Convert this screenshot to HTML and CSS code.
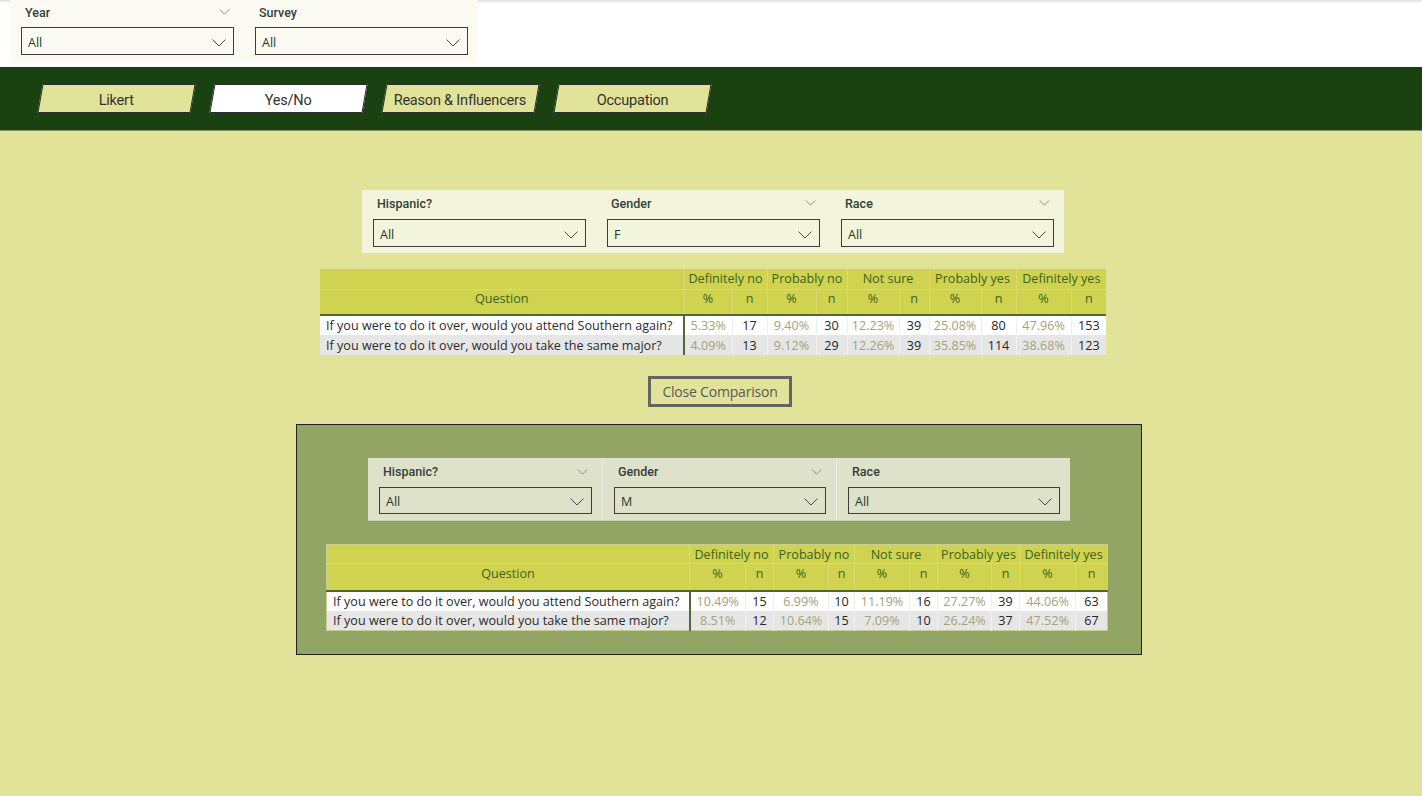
FILE: index.html
```html
<!DOCTYPE html>
<html lang="en">
<head>
<meta charset="utf-8">
<title>Yes/No</title>
<link rel="stylesheet" href="styles.css">
</head>
<body>
<header class="top">
  <div class="slicers slicers--top">
    <div class="slicer">
      <div class="slicer-head"><span>Year</span><svg class="head-chev" viewBox="0 0 12 7"><polyline points="0.5,0.5 6,6 11.5,0.5"/></svg></div>
      <div class="dropdown"><span>All</span><svg class="dd-chev" viewBox="0 0 14 8"><polyline points="0.5,0.5 7,7 13.5,0.5"/></svg></div>
    </div>
    <div class="slicer">
      <div class="slicer-head"><span>Survey</span></div>
      <div class="dropdown"><span>All</span><svg class="dd-chev" viewBox="0 0 14 8"><polyline points="0.5,0.5 7,7 13.5,0.5"/></svg></div>
    </div>
  </div>
</header>

<nav class="tabs">
  <div class="tab"><span>Likert</span></div>
  <div class="tab tab--active"><span>Yes/No</span></div>
  <div class="tab"><span>Reason &amp; Influencers</span></div>
  <div class="tab"><span>Occupation</span></div>
</nav>

<main class="page">
  <section class="slicers slicers--light">
    <div class="slicer">
      <div class="slicer-head"><span>Hispanic?</span></div>
      <div class="dropdown"><span>All</span><svg class="dd-chev" viewBox="0 0 14 8"><polyline points="0.5,0.5 7,7 13.5,0.5"/></svg></div>
    </div>
    <div class="slicer">
      <div class="slicer-head"><span>Gender</span><svg class="head-chev" viewBox="0 0 12 7"><polyline points="0.5,0.5 6,6 11.5,0.5"/></svg></div>
      <div class="dropdown"><span>F</span><svg class="dd-chev" viewBox="0 0 14 8"><polyline points="0.5,0.5 7,7 13.5,0.5"/></svg></div>
    </div>
    <div class="slicer">
      <div class="slicer-head"><span>Race</span><svg class="head-chev" viewBox="0 0 12 7"><polyline points="0.5,0.5 6,6 11.5,0.5"/></svg></div>
      <div class="dropdown"><span>All</span><svg class="dd-chev" viewBox="0 0 14 8"><polyline points="0.5,0.5 7,7 13.5,0.5"/></svg></div>
    </div>
  </section>

  <table class="matrix matrix--a">
    <colgroup>
      <col class="cq"><col class="c1"><col class="c2"><col class="c3"><col class="c4"><col class="c5"><col class="c6"><col class="c7"><col class="c8"><col class="c9"><col class="c10">
    </colgroup>
    <thead>
      <tr class="h1"><th class="q"></th><th colspan="2">Definitely no</th><th colspan="2">Probably no</th><th colspan="2">Not sure</th><th colspan="2">Probably yes</th><th colspan="2">Definitely yes</th></tr>
      <tr class="h2"><th class="q">Question</th><th>%</th><th>n</th><th>%</th><th>n</th><th>%</th><th>n</th><th>%</th><th>n</th><th>%</th><th>n</th></tr>
    </thead>
    <tbody>
      <tr><td class="q">If you were to do it over, would you attend Southern again?</td><td class="p">5.33%</td><td class="n">17</td><td class="p">9.40%</td><td class="n">30</td><td class="p">12.23%</td><td class="n">39</td><td class="p">25.08%</td><td class="n">80</td><td class="p">47.96%</td><td class="n">153</td></tr>
      <tr class="alt"><td class="q">If you were to do it over, would you take the same major?</td><td class="p">4.09%</td><td class="n">13</td><td class="p">9.12%</td><td class="n">29</td><td class="p">12.26%</td><td class="n">39</td><td class="p">35.85%</td><td class="n">114</td><td class="p">38.68%</td><td class="n">123</td></tr>
    </tbody>
  </table>

  <button class="close-btn" type="button">Close Comparison</button>

  <section class="compare">
    <div class="slicers slicers--pale">
      <div class="slicer">
        <div class="slicer-head"><span>Hispanic?</span><svg class="head-chev" viewBox="0 0 12 7"><polyline points="0.5,0.5 6,6 11.5,0.5"/></svg></div>
        <div class="dropdown"><span>All</span><svg class="dd-chev" viewBox="0 0 14 8"><polyline points="0.5,0.5 7,7 13.5,0.5"/></svg></div>
      </div>
      <div class="slicer">
        <div class="slicer-head"><span>Gender</span><svg class="head-chev" viewBox="0 0 12 7"><polyline points="0.5,0.5 6,6 11.5,0.5"/></svg></div>
        <div class="dropdown"><span>M</span><svg class="dd-chev" viewBox="0 0 14 8"><polyline points="0.5,0.5 7,7 13.5,0.5"/></svg></div>
      </div>
      <div class="slicer">
        <div class="slicer-head"><span>Race</span></div>
        <div class="dropdown"><span>All</span><svg class="dd-chev" viewBox="0 0 14 8"><polyline points="0.5,0.5 7,7 13.5,0.5"/></svg></div>
      </div>
    </div>

    <table class="matrix matrix--b">
      <colgroup>
        <col class="cq"><col class="c1"><col class="c2"><col class="c3"><col class="c4"><col class="c5"><col class="c6"><col class="c7"><col class="c8"><col class="c9"><col class="c10">
      </colgroup>
      <thead>
        <tr class="h1"><th class="q"></th><th colspan="2">Definitely no</th><th colspan="2">Probably no</th><th colspan="2">Not sure</th><th colspan="2">Probably yes</th><th colspan="2">Definitely yes</th></tr>
        <tr class="h2"><th class="q">Question</th><th>%</th><th>n</th><th>%</th><th>n</th><th>%</th><th>n</th><th>%</th><th>n</th><th>%</th><th>n</th></tr>
      </thead>
      <tbody>
        <tr><td class="q">If you were to do it over, would you attend Southern again?</td><td class="p">10.49%</td><td class="n">15</td><td class="p">6.99%</td><td class="n">10</td><td class="p">11.19%</td><td class="n">16</td><td class="p">27.27%</td><td class="n">39</td><td class="p">44.06%</td><td class="n">63</td></tr>
        <tr class="alt"><td class="q">If you were to do it over, would you take the same major?</td><td class="p">8.51%</td><td class="n">12</td><td class="p">10.64%</td><td class="n">15</td><td class="p">7.09%</td><td class="n">10</td><td class="p">26.24%</td><td class="n">37</td><td class="p">47.52%</td><td class="n">67</td></tr>
      </tbody>
    </table>
  </section>
</main>
</body>
</html>
```

FILE: styles.css
```css
* { box-sizing: border-box; }

html, body {
  margin: 0;
  padding: 0;
}

body {
  width: 1422px;
  min-height: 796px;
  background: #e1e398;
  font-family: "Open Sans", "Noto Sans", sans-serif;
  color: #333;
}

/* ---------- top filter strip ---------- */
.top {
  height: 67px;
  background: linear-gradient(#dcdcdc 0, #f4f4f4 2px, #ffffff 4px);
  padding-left: 10px;
}

/* ---------- slicers ---------- */
.slicers {
  display: flex;
  width: 702px;
  height: 63px;
}

.slicers--top {
  width: 468px;
  height: 62px;
  background: #fbfbf4;
}

.slicers--light { background: #f2f4dc; }
.slicers--pale {
  background: #dee2cb;
  border-bottom: 1px solid #c9cfb2;
}

.slicer {
  width: 234px;
  padding: 3px 10px 6px 11px;
  display: flex;
  flex-direction: column;
}

.slicers--top .slicer { padding-top: 2px; }
.slicers--top .dropdown { margin-top: 5px; }

.slicers--pale .slicer + .slicer {
  border-left: 1px solid #e9ecdc;
}

.slicers--pale .slicer { padding-top: 4px; }
.slicers--pale .dropdown { margin-top: 5px; }

.slicer-head {
  height: 20px;
  padding: 0 4px;
  display: flex;
  align-items: center;
  justify-content: space-between;
  font-family: "Roboto", "Liberation Sans", sans-serif;
  font-size: 12.5px;
  font-weight: 500;
  color: #34403a;
}

.head-chev {
  width: 11px;
  height: 6px;
  fill: none;
  stroke: #7d7d7d;
  stroke-width: 1;
}

.dropdown {
  margin-top: 6px;
  height: 28px;
  border: 1.5px solid #3d3d3d;
  display: flex;
  align-items: center;
  justify-content: space-between;
  padding: 3px 7px 0 6px;
  font-size: 12.5px;
  color: #1f3a2c;
}

.dd-chev {
  width: 14px;
  height: 8px;
  fill: none;
  stroke: #4a4a4a;
  stroke-width: 1;
}

/* ---------- tab bar ---------- */
.tabs {
  height: 64px;
  background: #1a4211;
  border-bottom: 1px solid #7e9063;
  display: flex;
  gap: 19px;
  padding: 17px 0 0 40px;
}

.tab {
  width: 153px;
  height: 29px;
  background: #e1e398;
  border: 1px solid #2d2d2d;
  transform: skewX(-10deg);
  display: flex;
  align-items: center;
  justify-content: center;
  padding-top: 3px;
}

.tab span {
  transform: skewX(10deg);
  font-family: "Roboto", "Liberation Sans", sans-serif;
  font-size: 14.5px;
  color: #333;
  letter-spacing: -0.2px;
}

.tab--active { background: #ffffff; }

/* ---------- main page ---------- */
.page {
  display: flex;
  flex-direction: column;
  align-items: flex-start;
  padding-top: 59px;
}

.page > .slicers { margin-left: 362px; }

/* ---------- matrix tables ---------- */
.matrix {
  border-collapse: collapse;
  table-layout: fixed;
  font-size: 12.6px;
  white-space: nowrap;
}

.matrix--a {
  width: 786px;
  margin: 16px 0 0 320px;
}

.matrix--b {
  width: 781px;
  margin: 23px 0 0 29px;
  border: 1px solid #c8cf8e;
}

.matrix th {
  background: #cfd350;
  color: #3d6220;
  font-weight: 400;
  padding: 0;
  text-align: center;
  overflow: hidden;
}

.matrix .h1 th {
  height: 20px;
  border-bottom: 1px solid #d9dc74;
}

.matrix--b .h1 th { height: 19px; }

.matrix .h2 th {
  height: 26px;
  vertical-align: top;
  padding-top: 0;
  border-bottom: 2px solid #4f6a2c;
  border-left: 1px solid #d9dc74;
}

.matrix--b .h2 th { height: 27px; padding-top: 1px; }

.matrix .h1 th + th { border-left: 1px solid #d9dc74; }
.matrix .h2 th.q { border-left: none; }

.matrix td {
  height: 20px;
  padding: 0;
  text-align: center;
  background: #ffffff;
  border-left: 1px solid #efefef;
  overflow: hidden;
}

.matrix tr.alt td {
  background: #e6e6e6;
  border-left-color: #f2f2f2;
}

.matrix td.q {
  text-align: left;
  padding-left: 6px;
  color: #2b2b2b;
  border-left: none;
  border-right: 2px solid #4f6a3a;
}

.matrix td.p { color: #a6a17a; }
.matrix td.n { color: #252525; }

.matrix--a .cq  { width: 364px; }
.matrix--a .c1  { width: 48px; }
.matrix--a .c2  { width: 35px; }
.matrix--a .c3  { width: 49px; }
.matrix--a .c4  { width: 31px; }
.matrix--a .c5  { width: 52px; }
.matrix--a .c6  { width: 30px; }
.matrix--a .c7  { width: 52px; }
.matrix--a .c8  { width: 35px; }
.matrix--a .c9  { width: 55px; }
.matrix--a .c10 { width: 35px; }

.matrix--b .cq  { width: 363px; }
.matrix--b .c1  { width: 56px; }
.matrix--b .c2  { width: 28px; }
.matrix--b .c3  { width: 55px; }
.matrix--b .c4  { width: 26px; }
.matrix--b .c5  { width: 55px; }
.matrix--b .c6  { width: 28px; }
.matrix--b .c7  { width: 54px; }
.matrix--b .c8  { width: 28px; }
.matrix--b .c9  { width: 56px; }
.matrix--b .c10 { width: 32px; }

/* ---------- close button ---------- */
.close-btn {
  margin: 21px 0 0 648px;
  width: 144px;
  height: 31px;
  background: transparent;
  border: 3px solid #646464;
  font-family: "Open Sans", "Noto Sans", sans-serif;
  font-size: 14px;
  color: #595959;
  padding: 0;
  letter-spacing: -0.2px;
}

/* ---------- comparison panel ---------- */
.compare {
  margin: 17px 0 0 296px;
  width: 846px;
  height: 231px;
  background: #93a564;
  border: 1px solid #222;
  display: flex;
  flex-direction: column;
  align-items: flex-start;
  padding-top: 33px;
}

.compare > .slicers { margin-left: 71px; }
```
